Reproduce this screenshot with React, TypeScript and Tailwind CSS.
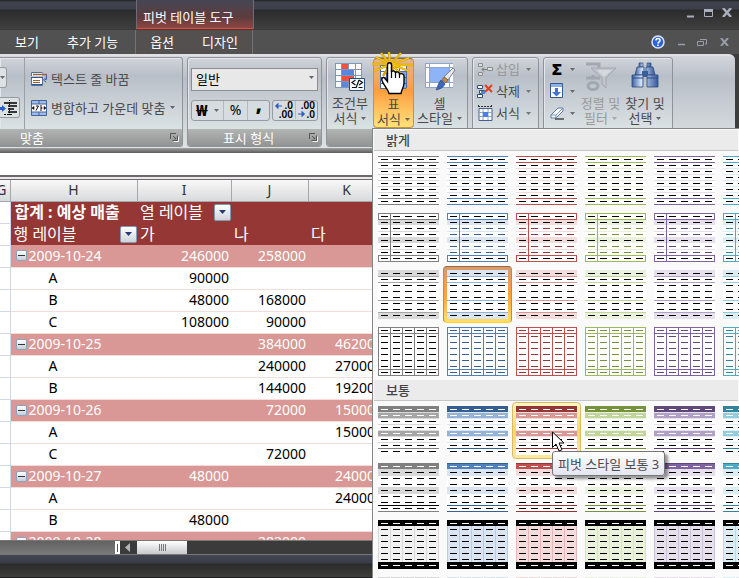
import React from "react";
import type { ReactNode } from "react";
import clsx from "clsx";

// ─── Table style gallery ──────────────────────────────────────────────────────

interface Palette {
  name: string;
  accent: string;
  dark: string;
  mid: string;
  light: string;
  rule: string;
  fill: string;
  ink: string;
}

const PALETTES: Palette[] = [
  { name: "회색", accent: "#808080", dark: "#808080", mid: "#a6a6a6", light: "#d9d9d9", rule: "#d9d9d9", fill: "#f2f2f2", ink: "#000" },
  { name: "파랑", accent: "#4f81bd", dark: "#366092", mid: "#95b3d7", light: "#dbe5f1", rule: "#b8cce4", fill: "#dbe5f1", ink: "#366092" },
  { name: "빨강", accent: "#c0504d", dark: "#953735", mid: "#d99795", light: "#f2dddc", rule: "#e6b9b8", fill: "#f2dddc", ink: "#953735" },
  { name: "녹색", accent: "#9bbb59", dark: "#76923c", mid: "#c2d69b", light: "#eaf1dd", rule: "#d7e4bc", fill: "#eaf1dd", ink: "#76923c" },
  { name: "자주", accent: "#8064a2", dark: "#5f497a", mid: "#b2a1c7", light: "#e5e0ec", rule: "#ccc1da", fill: "#e5e0ec", ink: "#5f497a" },
  { name: "바다색", accent: "#4bacc6", dark: "#31849b", mid: "#93cddd", light: "#daeef3", rule: "#b7dde8", fill: "#daeef3", ink: "#31849b" },
];

type Bar = [y: number, height: number, color: string];

interface Design {
  fill?: string;
  bars: Bar[];
  columns?: number[];
  columnColor?: string;
  boxes?: number[];
  dashes: string[];
}

const K = "#000";
const W = "#fff";

function getDesign(kind: number, p: Palette): Design {
  switch (kind) {
    case 0:
      return {
        bars: [
          [0, 1, p.accent], [6, 1, p.accent], [12, 1, p.light], [18, 1, p.light], [24, 1, p.light],
          [30, 1, p.light], [36, 1, p.light], [42, 1, p.accent], [48, 1, p.accent],
        ],
        dashes: [K, K, K, K, K, K, K, K],
      };
    case 1:
      return {
        bars: [[7, 5, p.light], [18, 1, p.light], [24, 6, p.light], [36, 1, p.light]],
        columns: [12],
        columnColor: p.accent,
        boxes: [0, 42],
        dashes: [K, K, p.ink, p.ink, K, p.ink, p.ink, K],
      };
    case 2:
      return {
        bars: [
          [0, 6, p.light], [6, 1, p.mid], [12, 1, p.mid], [30, 1, p.mid], [42, 1, p.mid], [43, 6, p.light],
        ],
        dashes: [K, K, K, K, K, K, K, K],
      };
    case 3:
      return {
        bars: [],
        columns: [0, 12, 24, 36, 48, 60],
        columnColor: p.accent,
        boxes: [0, 42],
        dashes: Array(8).fill(p.ink),
      };
    case 4:
      return {
        bars: [
          [0, 6, p.dark], [6, 1, p.light], [7, 5, p.mid], [12, 1, p.light], [18, 1, p.light],
          [24, 1, p.light], [25, 5, p.mid], [30, 1, p.light], [36, 1, p.light], [42, 1, p.dark],
        ],
        dashes: [W, W, K, K, W, K, K, K],
      };
    case 5:
      return {
        bars: [
          [0, 6, p.accent], [0, 1, p.dark], [6, 7, p.light], [24, 7, p.light],
          [42, 1, p.name === "회색" ? K : p.dark], [48, 1, p.dark],
        ],
        dashes: [W, K, K, K, K, K, K, K],
      };
    case 6:
      return {
        fill: p.fill,
        bars: [[0, 6, K], [42, 7, K]],
        columns: [0, 12, 24, 36, 48, 60],
        columnColor: p.rule,
        dashes: [W, K, K, K, K, K, K, W],
      };
    default:
      return {
        fill: p.fill,
        bars: [[0, 1, p.light]],
        columns: [12, 24, 36, 48],
        columnColor: W,
        dashes: [K, K, K, K, K, K, K, K],
      };
  }
}

function StyleThumb({ kind, palette }: { kind: number; palette: Palette }) {
  const d = getDesign(kind, palette);
  return (
    <svg width="61" height="49" viewBox="0 0 61 49" className="shrink-0" shapeRendering="crispEdges" aria-hidden="true">
      <rect width="61" height="49" fill={d.fill ?? W} />
      {kind !== 6 &&
        d.bars.map(([y, h, c], i) => <rect key={i} y={y} width="61" height={h} fill={c} />)}
      {d.columns?.map((x) => <rect key={x} x={x} width="1" height="49" fill={d.columnColor} />)}
      {kind === 6 &&
        d.bars.map(([y, h, c], i) => <rect key={i} y={y} width="61" height={h} fill={c} />)}
      {d.boxes?.map((y) => (
        <path key={y} d={`M.5 ${y + 0.5}h60v6H.5z`} fill="none" stroke={palette.accent} />
      ))}
      {d.dashes.map((c, row) =>
        [3, 15, 27, 39, 51].map((x) => (
          <rect key={`${row}-${x}`} x={x} y={row * 6 + 3} width="7" height="1" fill={c} />
        ))
      )}
    </svg>
  );
}

function GallerySection({ title, kinds, children }: { title: string; kinds: number[]; children?: ReactNode }) {
  return (
    <section>
      <h2 className="flex h-[21px] items-center border-b border-[#c5c5c5] bg-[#ebebeb] pl-3 text-[13px] font-medium leading-4 text-[#444]">
        {title}
      </h2>
      <div className="grid grid-cols-[repeat(6,69px)] pt-px">
        {kinds.map((kind) =>
          PALETTES.map((p, col) => {
            const selected = kind === 2 && col === 1;
            const hovered = kind === 4 && col === 2;
            return (
              <div key={`${kind}-${p.name}`} className="relative h-[57px]">
                <button
                  aria-label={`${title} ${kind + 1} ${p.name}`}
                  className={clsx(
                    "flex h-full w-full items-center justify-center",
                    selected &&
                      "rounded-sm border border-[#a8906c] border-t-[#96694a] border-b-[#ffd12e] bg-linear-to-b from-[#d99a68] via-[#ffa03a] to-[#ffe066]",
                    hovered && "rounded-sm border border-[#d9bc62] bg-linear-to-b from-[#fff6c8] via-[#ffd65a] to-[#ffe9a0]"
                  )}
                >
                  <StyleThumb kind={kind} palette={p} />
                </button>
                {hovered && children}
              </div>
            );
          })
        )}
      </div>
    </section>
  );
}

function HoverTip() {
  return (
    <>
      <svg className="absolute left-10 top-[29px] z-20" width="14" height="22" viewBox="0 0 14 22" aria-hidden="true">
        <path d="M.5 1v15.500l3.500-3.500 3 7 3-1.300-3-6.700h5z" fill="#fff" stroke="#000" />
      </svg>
      <div
        role="tooltip"
        className="absolute left-10 top-[49px] z-10 flex h-[25px] items-center whitespace-nowrap rounded-[3px] border border-[#767676] bg-linear-to-b from-white to-[#e4e5f0] px-[5px] text-[13px] leading-4 text-[#4c4c4c] shadow-[3px_3px_3px_rgba(0,0,0,0.4)]"
      >
        피벗 스타일 보통 3
      </div>
    </>
  );
}

// ─── Icons ────────────────────────────────────────────────────────────────────

function Caret({ className = "text-[#6a6a6a]" }: { className?: string }) {
  return (
    <svg width="5" height="3" viewBox="0 0 5 3" className={clsx("shrink-0", className)} aria-hidden="true">
      <path d="M0 0h5L2.500 3z" fill="currentColor" />
    </svg>
  );
}

function WrapIcon() {
  return (
    <svg width="16" height="16" viewBox="0 0 16 16" aria-hidden="true">
      <path d="M1 1h10v4H1zM1 7h10v7H1z" fill="#fff" />
      <path d="M.5 5V1.500h11M.5 7v7.500h11V7" fill="none" stroke="#51709c" />
      <path d="M2 3.500h14" stroke="#a0622d" strokeWidth="1.500" />
      <path d="M0 6.500h12M1 13.500h10" stroke="#37598f" />
      <path d="M2 9.500h7M2 11.500h7" stroke="#a0622d" />
      <path d="M15.500 4v4.500H14M15 6.500L12.500 9l2.500 2" fill="none" stroke="#3b64a8" />
    </svg>
  );
}

function MergeIcon() {
  return (
    <svg width="16" height="16" viewBox="0 0 16 16" aria-hidden="true">
      <path d="M.5.500h15v15H.5z" fill="#9fbbe6" stroke="#40659b" />
      <path d="M1 4h14v8H1z" fill="#fff" />
      <path d="M8 0v4M8 12v4M0 4h16M0 12h16" stroke="#40659b" />
      <path d="M1 8l2-1.500v3zM15 8l-2-1.500v3z" stroke="#111" fill="#111" strokeWidth=".6" />
      <path d="M5 6h2.500L5 10.500M10 5v6M10 8h1.500" fill="none" stroke="#111" />
    </svg>
  );
}

function IndentIcon() {
  return (
    <svg width="17" height="16" viewBox="0 0 17 16" aria-hidden="true">
      <path d="M0 8.500h3" stroke="#2b62c9" strokeWidth="3" />
      <path d="M2 5l4 3.500L2 12z" fill="#2b62c9" />
      <path d="M4 3h13M8 6h9M8 9h6M8 12h9" stroke="#000" strokeWidth="1.500" />
      <path d="M4 14.500h9" stroke="#000" strokeDasharray="2 1" />
      <path d="M9.500 0v16" stroke="#000" strokeDasharray="1 1" />
    </svg>
  );
}

function LauncherIcon() {
  return (
    <svg width="9" height="9" viewBox="0 0 9 9" aria-hidden="true">
      <path d="M.5 6V.5H6" fill="none" stroke="#555" />
      <path d="M3.500 8.500h5v-5M3 3l3 3M6 3.500V6H3.500" fill="none" stroke="#f4f4f4" />
      <path d="M2.500 7.500h5v-5M3 3l3 3M6 3.500V6H3.500" fill="none" stroke="#555" />
    </svg>
  );
}

function ConditionalIcon() {
  return (
    <svg width="32" height="30" viewBox="0 0 32 30" aria-hidden="true">
      <path d="M1 1h27v24H1z" fill="#fff" />
      <path d="M8 1h6v6H8zM8 13h12v6H8z" fill="#f0513c" />
      <path d="M8 7h12v6H8zM8 19h6v6H8z" fill="#5b86dd" />
      <path d="M1.500 1v24M7.500 1v24M14.500 1v6M14.500 19v6M21.500 1v24M27.500 1v24M1 1.500h27M1 7.500h27M1 13.500h27M1 19.500h27M1 25.500h27" stroke="#7d96bd" />
      <path d="M15.500 16.500h15v12h-15z" fill="#f5f8fc" stroke="#2f4c78" />
      <path d="M21.500 18L18 20.500l3.500 2.500M18 25.500h4M25 18l3.500 2.500L25 23M24.500 25.500h4M22 26l3-8" fill="none" stroke="#111" strokeWidth="1.200" />
    </svg>
  );
}

function TableIcon() {
  return (
    <svg width="32" height="30" viewBox="0 0 32 30" aria-hidden="true">
      <path d="M2 2h26v23H2z" fill="#fff" />
      <path d="M8 8h20v17H8z" fill="#7fa7e8" />
      <path d="M2.500 2v23M8.500 2v23M14.500 2v23M21.500 2v23M28.500 2v23M2 2.500h26M2 8.500h26M2 14.500h26M2 20.500h26M2 25.500h26" stroke="#4a6da8" />
    </svg>
  );
}

function CellStyleIcon() {
  return (
    <svg width="32" height="30" viewBox="0 0 32 30" aria-hidden="true">
      <path d="M1 1h28v24H1z" fill="#fff" />
      <path d="M6 6h19v14H6z" fill="#8fb3f7" />
      <path d="M1.500 1v24M5.500 1v24M25.500 1v24M1 1.500h28M1 5.500h28M1 20.500h28M1 25.500h28" stroke="#8ba5d0" />
      <path d="M29 6l2 2-7 10-4-3z" fill="#e8eaee" stroke="#7a7f8a" />
      <path d="M20 15l4 3-2 3-4-3z" fill="#c48b4a" stroke="#7b5323" strokeWidth=".7" />
      <path d="M17 18l4 4c-2 4-5 5-9 6 2-3 2-7 5-10z" fill="#3b68bb" stroke="#27498a" strokeWidth=".7" />
    </svg>
  );
}

function InsertIcon() {
  return (
    <svg width="16" height="15" viewBox="0 0 16 15" aria-hidden="true">
      <path d="M1.500 1.500h4v3h-4zM1.500 10.500h4v3h-4zM10.500 5.500h5v3h-5z" fill="#dcdcdc" stroke="#8d8d8d" />
      <path d="M5 7.500h5M7 5.500l-2 2 2 2" fill="none" stroke="#777" />
    </svg>
  );
}

function DeleteIcon() {
  return (
    <svg width="16" height="15" viewBox="0 0 16 15" aria-hidden="true">
      <path d="M.5 1.500h5v3h-5zM.5 10.500h5v3h-5zM2.500 6.500h5v3h-5z" fill="#fff" stroke="#2f4d7c" />
      <path d="M4 7h4v3H4z" fill="#4c86e4" />
      <path d="M8 1l7 7M15 1L8 8" stroke="#e2401c" strokeWidth="2" />
    </svg>
  );
}

function FormatIcon() {
  return (
    <svg width="16" height="16" viewBox="0 0 16 16" aria-hidden="true">
      <path d="M2 3.500h13v12H2z" fill="#fff" stroke="#44618f" />
      <path d="M6 4v11M11 4v11M2 7.500h13M2 11.500h13" stroke="#8aa3c9" />
      <path d="M6 7h5v5H6z" fill="#4c7fe0" />
      <path d="M1 1.500h14M1.500 0v3M14.500 0v3" stroke="#333" strokeDasharray="2 1" />
    </svg>
  );
}

function FillIcon() {
  return (
    <svg width="14" height="16" viewBox="0 0 14 16" aria-hidden="true">
      <path d="M.5.500h12v14H.5z" fill="#fff" stroke="#34578f" />
      <path d="M1 1h11v3H1z" fill="#8fb0e6" />
      <path d="M5 5h3v4h3l-4.500 4.500L2 9h3z" fill="#3f73d8" />
    </svg>
  );
}

function EraserIcon() {
  return (
    <svg width="15" height="13" viewBox="0 0 15 13" aria-hidden="true">
      <path d="M1 8l7-7h5v3l-7 7H1z" fill="#f7f9fc" stroke="#5f7ba8" />
      <path d="M1 8h5l7-7M6 8v3" fill="none" stroke="#7f98c0" />
      <path d="M5 12h9" stroke="#000" />
    </svg>
  );
}

function SortFilterIcon() {
  return (
    <svg width="32" height="30" viewBox="0 0 32 30" aria-hidden="true">
      <path d="M1 2h13v9M1 16h14M8 13v3" fill="none" stroke="#a3a7ae" strokeWidth="3" />
      <ellipse cx="8" cy="24" rx="5" ry="3.500" fill="none" stroke="#a3a7ae" strokeWidth="3" />
      <path d="M6 6h25L21 16v10l-4-4v-6z" fill="#c0c3c9" stroke="#a3a7ae" />
      <path d="M12 8h15l-8 7z" fill="#d5d8dc" />
    </svg>
  );
}

function BinocularsIcon() {
  return (
    <svg width="28" height="26" viewBox="0 0 28 26" aria-hidden="true">
      <defs>
        <linearGradient id="barrel">
          <stop offset="0" stopColor="#3a5f9e" />
          <stop offset=".35" stopColor="#d3e2fa" />
          <stop offset="1" stopColor="#35599a" />
        </linearGradient>
      </defs>
      <path d="M8 1h4v4H8zM16 1h4v4h-4z" fill="url(#barrel)" stroke="#2d4a7c" strokeWidth=".7" />
      <path d="M6 5h7v8H4zM15 5h7l2 8h-9z" fill="url(#barrel)" stroke="#2d4a7c" strokeWidth=".8" />
      <path d="M11 9h6v6h-6z" fill="#3a5f9e" />
      <path d="M1 13h11v12H1zM16 13h11v12H16z" fill="url(#barrel)" stroke="#2d4a7c" strokeWidth=".8" />
      <path d="M1 16h11M16 16h11" stroke="#2d4f8a" />
    </svg>
  );
}

function HandPointer() {
  return (
    <svg className="h-[50px] w-12" viewBox="0 0 48 50" aria-hidden="true">
      <path
        d="M12 4l8 10M20 3l1 11M32 4l-9 10M40 9l-16 6M44 16H24M40 22l-16-6M34 27l-10-10M27 30l-5-14M14 27l7-11M5 22l15-6M3 15h16M7 8l13 7"
        fill="none"
        stroke="#d9a200"
        strokeWidth="2.400"
      />
      <path
        d="M12 4l8 10M20 3l1 11M32 4l-9 10M40 9l-16 6M44 16H24M40 22l-16-6M34 27l-10-10M5 22l15-6M3 15h16M7 8l13 7"
        fill="none"
        stroke="#fbcf1c"
        strokeWidth="1"
      />
      <path
        d="M18.500 16c0-3 4-3 4 0v7c1-2 4-1 4 1 1-2 4-1 4 1 2-1 4.500 0 4.500 2v7c0 4-2 5-3 10.500h-12c0-3-6-9-7-13-1-3 2-4 3-2l2.500 3z"
        fill="#fff"
        stroke="#000"
        strokeWidth="1.400"
      />
      <path d="M22.500 21v8M26.500 23v6M30.500 24v5" stroke="#000" strokeWidth="1.200" />
    </svg>
  );
}

// ─── Ribbon ───────────────────────────────────────────────────────────────────

interface RibbonGroupProps {
  label?: string;
  labelClass?: string;
  className?: string;
  children: ReactNode;
}

function RibbonGroup({ label, labelClass = "text-center", className, children }: RibbonGroupProps) {
  return (
    <section
      className={clsx(
        "flex h-[90px] shrink-0 flex-col overflow-hidden rounded-[3px] border border-[#8f9399] bg-linear-to-b from-[#d0d4da] via-[#b9bfc8] via-20% to-[#e6eded] shadow-[inset_1px_1px_0_#e3e6ea]",
        className
      )}
    >
      <div className="flex min-h-0 flex-1">{children}</div>
      <div className="flex h-[17px] items-center bg-linear-to-b from-[#b3b5b5] to-[#929393] text-[13px] leading-4 text-white">
        <span className={clsx("flex-1", labelClass)}>{label}</span>
        {label && (
          <button aria-label={`${label} 옵션`} className="pr-[3px]">
            <LauncherIcon />
          </button>
        )}
      </div>
    </section>
  );
}

interface BigButtonProps {
  icon: ReactNode;
  top: string;
  bottom: string;
  active?: boolean;
  disabled?: boolean;
  className?: string;
}

function BigButton({ icon, top, bottom, active, disabled, className }: BigButtonProps) {
  return (
    <button
      disabled={disabled}
      className={clsx(
        "flex h-[70px] shrink-0 flex-col items-center whitespace-nowrap pt-1 text-[13px] leading-[15px]",
        disabled ? "text-[#999]" : "text-[#4a4a4a]",
        active &&
          "rounded-sm border border-[#c9953a] border-t-[#8d6a48] bg-linear-to-b from-[#e3b68a] via-[#fb9c3c] via-45% to-[#ffe27a]",
        className
      )}
    >
      <span className="flex h-[34px] items-start justify-center">{icon}</span>
      <span>{top}</span>
      <span className="flex items-center gap-1">
        {bottom}
        <Caret className={disabled ? "text-[#aaa]" : "text-[#666]"} />
      </span>
    </button>
  );
}

function SmallButton({ icon, label, disabled }: { icon: ReactNode; label: string; disabled?: boolean }) {
  return (
    <button
      disabled={disabled}
      className={clsx(
        "flex h-[22px] items-center gap-[3px] text-[13px] leading-4",
        disabled ? "text-[#999]" : "text-[#4a4a4a]"
      )}
    >
      <span className="flex w-4 justify-center">{icon}</span>
      <span>{label}</span>
      <Caret className="ml-[3px] text-[#777]" />
    </button>
  );
}

function Ribbon() {
  return (
    <div className="mr-1 flex h-[94px] shrink-0 gap-1 overflow-hidden rounded-tr-md border-t-2 border-[#dfe1e5] bg-linear-to-b from-[#d3d6db] via-[#b9bfc8] via-25% to-[#dde3e3] pt-px">
      <RibbonGroup label="맞춤" labelClass="pl-5" className="w-[183px] rounded-l-none border-l-0">
        <div className="flex w-[25px] shrink-0 flex-col gap-[9px] border-r border-[#9ba0a7] py-[9px] pr-1">
          <button aria-label="방향" className="flex h-[21px] w-[7px] items-center rounded-r-[3px] border border-l-0 border-[#969ba1] bg-[#dde3e5]">
            <Caret />
          </button>
          <button aria-label="들여쓰기" className="flex h-[21px] w-5 items-center rounded-r-[3px] border border-l-0 border-[#969ba1] bg-[#dde3e5]">
            <IndentIcon />
          </button>
        </div>
        <div className="flex flex-col gap-1.5 pl-1.5 pt-[9px] text-[13px] leading-4 text-[#4a4a4a]">
          <button className="flex h-[23px] items-center gap-1">
            <WrapIcon />
            텍스트 줄 바꿈
          </button>
          <button className="flex h-[23px] items-center gap-1 whitespace-nowrap">
            <MergeIcon />
            병합하고 가운데 맞춤
            <Caret className="ml-px text-[#666]" />
          </button>
        </div>
      </RibbonGroup>

      <RibbonGroup label="표시 형식" className="w-[135px]">
        <div className="flex w-full flex-col gap-[9px] px-[3px] pt-2">
          <div className="relative">
            <select
              aria-label="표시 형식"
              className="h-[23px] w-full appearance-none border border-[#8d8d8d] bg-[#e8e8e8] px-1 text-[13px] leading-4 text-black"
            >
              <option>일반</option>
            </select>
            <Caret className="pointer-events-none absolute right-1 top-2.5 text-[#666]" />
          </div>
          <div className="flex justify-between">
            <div className="flex h-[21px] items-center rounded-[3px] border border-[#969ba1] bg-[#d6dcdf] text-black">
              <button className="flex h-full items-center gap-1.5 px-1 text-[15px] font-black">
                ₩
                <Caret />
              </button>
              <button className="h-full border-x border-[#b4b9be] px-1.5 text-sm leading-4">%</button>
              <button className="flex h-full w-[21px] items-center justify-center pb-3 text-xl font-black leading-3">,</button>
            </div>
            <div className="flex h-[21px] items-center rounded-[3px] border border-[#969ba1] bg-[#d6dcdf] text-[10px] font-semibold leading-[9px] text-black">
              <button aria-label="자릿수 늘림" className="relative w-[22px] pr-0.5 text-right">
                <svg className="absolute left-0.5 top-0.5" width="7" height="6" viewBox="0 0 7 6" aria-hidden="true">
                  <path d="M7 3H2M3 .500L.500 3 3 5.500z" fill="#2a5cc0" stroke="#2a5cc0" />
                </svg>
                .0
                <br />
                .00
              </button>
              <button aria-label="자릿수 줄임" className="relative w-[22px] border-l border-[#b4b9be] pr-0.5 text-right">
                .00
                <br />
                .0
                <svg className="absolute bottom-0.5 left-0.5" width="7" height="6" viewBox="0 0 7 6" aria-hidden="true">
                  <path d="M0 3h5M4 .500L6.500 3 4 5.500z" fill="#2a5cc0" stroke="#2a5cc0" />
                </svg>
              </button>
            </div>
          </div>
        </div>
      </RibbonGroup>

      <RibbonGroup className="w-[142px]">
        <BigButton className="w-[46px]" icon={<ConditionalIcon />} top="조건부" bottom="서식" />
        <BigButton className="w-[41px]" icon={<TableIcon />} top="표" bottom="서식" active />
        <BigButton className="w-[51px]" icon={<CellStyleIcon />} top="셀" bottom="스타일" />
      </RibbonGroup>

      <RibbonGroup className="w-[67px]">
        <div className="flex flex-col pl-1">
          <SmallButton icon={<InsertIcon />} label="삽입" disabled />
          <SmallButton icon={<DeleteIcon />} label="삭제" />
          <SmallButton icon={<FormatIcon />} label="서식" />
        </div>
      </RibbonGroup>

      <RibbonGroup className="w-[130px]">
        <div className="flex w-[31px] shrink-0 flex-col pl-1.5">
          <button aria-label="합계" className="flex h-[22px] items-center justify-between pl-0.5 text-base font-black leading-4 text-black">
            Σ
            <Caret />
          </button>
          <button aria-label="채우기" className="flex h-[22px] items-center justify-between">
            <FillIcon />
            <Caret />
          </button>
          <button aria-label="지우기" className="flex h-[22px] items-center justify-between">
            <EraserIcon />
            <Caret />
          </button>
        </div>
        <BigButton className="ml-[3px] w-[45px]" icon={<SortFilterIcon />} top="정렬 및" bottom="필터" disabled />
        <BigButton className="w-11" icon={<BinocularsIcon />} top="찾기 및" bottom="선택" />
      </RibbonGroup>
    </div>
  );
}

// ─── Title bar and tabs ───────────────────────────────────────────────────────

function TitleBar() {
  return (
    <header className="flex h-[30px] shrink-0 items-stretch border-b border-[#3a3a3a] bg-[linear-gradient(#202020_0,#3f424d_2px,#3d404b_9px,#2b2b2b_10px,#3f3f3f_100%)]">
      <div className="w-[136px] shrink-0" />
      <h1 className="flex w-[118px] shrink-0 items-center border-x border-b border-[#6c6d78] border-b-[#ef4b3c] bg-linear-to-b from-[#444653] via-[#5c3c3e] via-60% to-[#8f4440] pl-1.5 pt-1.5 text-[13px] leading-4 text-white">
        피벗 테이블 도구
      </h1>
      <div className="flex flex-1 items-center justify-end gap-[9px] pb-1 pr-[7px] text-[#a9aebd]">
        <button aria-label="최소화">
          <svg width="9" height="10" viewBox="0 0 9 10"><path d="M1 8.500h7" stroke="currentColor" strokeWidth="2" /></svg>
        </button>
        <button aria-label="최대화">
          <svg width="9" height="8" viewBox="0 0 9 8"><path d="M.5 1v6.500h8V1" fill="none" stroke="currentColor" /><path d="M0 1.500h9" stroke="currentColor" strokeWidth="3" /></svg>
        </button>
        <button aria-label="닫기">
          <svg width="10" height="9" viewBox="0 0 10 9"><path d="M1 0l8 9M9 0L1 9" stroke="currentColor" strokeWidth="2.500" /></svg>
        </button>
      </div>
    </header>
  );
}

function TabRow() {
  return (
    <nav className="flex h-6 shrink-0 items-stretch bg-[#515151] pl-px text-[13px] leading-4 text-white">
      <button className="px-3.5">보기</button>
      <button className="px-3.5">추가 기능</button>
      <div className="ml-[3px] flex border-x border-[#73747a] bg-[#545050]">
        <button className="px-3.5">옵션</button>
        <button className="px-3.5">디자인</button>
      </div>
      <div className="flex flex-1 items-center justify-end gap-3 pr-2.5 text-[#989cab]">
        <button aria-label="도움말">
          <svg width="14" height="14" viewBox="0 0 14 14">
            <circle cx="7" cy="7" r="6" fill="#2c63d6" stroke="#dbe6ff" strokeWidth="1.500" />
            <path d="M5 5.500c0-2.700 4-2.700 4 0 0 1.500-2 1.500-2 3M7 9.500v1.500" fill="none" stroke="#fff" strokeWidth="1.600" />
          </svg>
        </button>
        <button aria-label="창 최소화">
          <svg width="8" height="8" viewBox="0 0 8 8"><path d="M1 6.500h7" stroke="currentColor" strokeWidth="1.500" /></svg>
        </button>
        <button aria-label="창 복원">
          <svg width="10" height="7" viewBox="0 0 10 7"><path d="M.5 2.500h6v4h-6zM3 .500h6.500v4.500H8" fill="none" stroke="currentColor" /></svg>
        </button>
        <button aria-label="창 닫기" className="ml-px">
          <svg width="9" height="8" viewBox="0 0 9 8"><path d="M1 0l7 8M8 0L1 8" stroke="currentColor" strokeWidth="2" /></svg>
        </button>
      </div>
    </nav>
  );
}

// ─── Sheet ────────────────────────────────────────────────────────────────────

interface PivotRow {
  label: string;
  group?: boolean;
  values: [string, string, string];
}

const ROWS: PivotRow[] = [
  { label: "2009-10-24", group: true, values: ["246000", "258000", ""] },
  { label: "A", values: ["90000", "", ""] },
  { label: "B", values: ["48000", "168000", ""] },
  { label: "C", values: ["108000", "90000", ""] },
  { label: "2009-10-25", group: true, values: ["", "384000", "462000"] },
  { label: "A", values: ["", "240000", "270000"] },
  { label: "B", values: ["", "144000", "192000"] },
  { label: "2009-10-26", group: true, values: ["", "72000", "150000"] },
  { label: "A", values: ["", "", "150000"] },
  { label: "C", values: ["", "72000", ""] },
  { label: "2009-10-27", group: true, values: ["48000", "", "240000"] },
  { label: "A", values: ["", "", "240000"] },
  { label: "B", values: ["48000", "", ""] },
  { label: "2009-10-28", group: true, values: ["", "282000", ""] },
];

function FilterButton({ label }: { label: string }) {
  return (
    <button
      aria-label={label}
      className="flex h-[17px] w-[17px] shrink-0 items-center justify-center rounded-[2px] border border-[#7f9db9] bg-linear-to-b from-white to-[#cfd4da]"
    >
      <svg width="7" height="4" viewBox="0 0 7 4"><path d="M0 0h7L3.500 4z" fill="#253a78" /></svg>
    </button>
  );
}

function Sheet() {
  return (
    <main className="min-h-0 flex-1 overflow-hidden bg-white">
      <table className="w-full table-fixed border-collapse text-sm leading-4 text-black">
        <colgroup>
          <col className="w-2.5" />
          <col className="w-[127px]" />
          <col className="w-[94px]" />
          <col className="w-[77px]" />
          <col className="w-[77px]" />
          <col />
        </colgroup>
        <thead>
          <tr className="h-[21px] bg-linear-to-b from-[#f8f8f8] to-[#d9dadc] text-[#333]">
            {["G", "H", "I", "J", "K", "L"].map((c) => (
              <th key={c} className="overflow-hidden border-b border-r border-[#a5a7aa] p-0 font-normal">
                <span className={clsx("flex", c === "G" ? "justify-end pr-[3px]" : "justify-center")}>{c}</span>
              </th>
            ))}
          </tr>
        </thead>
        <tbody>
          <tr className="h-[22px] bg-[#953735] text-base leading-4 text-white">
            <td className="border-b border-r border-[#d0d7e5] bg-white" />
            <th className="whitespace-nowrap p-0 pl-1 text-left font-bold">합계 : 예상 매출</th>
            <td className="p-0 pl-[3px]">
              <div className="flex items-center justify-between whitespace-nowrap">
                열 레이블
                <FilterButton label="열 레이블 필터" />
              </div>
            </td>
            <td colSpan={3} />
          </tr>
          <tr className="h-[22px] bg-[#953735] text-base leading-4 text-white">
            <td className="border-b border-r border-[#d0d7e5] bg-white" />
            <td className="p-0 pl-[3px]">
              <div className="flex items-center justify-between">
                행 레이블
                <FilterButton label="행 레이블 필터" />
              </div>
            </td>
            <td className="p-0 pl-[3px]">가</td>
            <td className="p-0 pl-[3px]">나</td>
            <td className="p-0 pl-[3px]">다</td>
            <td />
          </tr>
          {ROWS.map((row, i) => (
            <tr
              key={i}
              className={clsx("h-[22px] border-b border-[#f2dddc]", row.group ? "bg-[#d99795] text-white" : "bg-white")}
            >
              <td className="border-b border-r border-[#d0d7e5] bg-white p-0" />
              <td className="whitespace-nowrap p-0">
                {row.group ? (
                  <div className="flex items-center gap-0.5 pl-[5px]">
                    <button
                      aria-label={`${row.label} 축소`}
                      className="flex h-[11px] w-[11px] items-center justify-center rounded-[2px] border border-[#8ba3bd] bg-linear-to-b from-white to-[#c5cdd6]"
                    >
                      <span className="h-px w-[7px] bg-[#333]" />
                    </button>
                    {row.label}
                  </div>
                ) : (
                  <div className="pl-[38px]">{row.label}</div>
                )}
              </td>
              {row.values.map((v, j) => (
                <td key={j} className="p-0 pr-0.5 text-right">{v}</td>
              ))}
              <td />
            </tr>
          ))}
        </tbody>
      </table>
    </main>
  );
}

function SheetFooter() {
  return (
    <footer className="shrink-0">
      <div className="flex h-[15px] items-stretch border-y border-[#777] bg-[#3b3b3b]">
        <div className="w-[115px] bg-linear-to-b from-[#626262] to-[#7a7a7a]" />
        <div className="flex w-[5px] items-center justify-center bg-white">
          <span className="h-2 w-px bg-[#555]" />
        </div>
        <button aria-label="왼쪽으로" className="flex w-[17px] items-center pl-[5px]">
          <svg width="5" height="9" viewBox="0 0 5 9"><path d="M5 0v9L0 4.500z" fill="#b5b5b5" /></svg>
        </button>
        <div className="flex w-[50px] items-center justify-center gap-px bg-linear-to-b from-white to-[#c9cacc]">
          {[0, 1, 2, 3].map((n) => (
            <span key={n} className="h-[7px] w-px bg-[#777]" />
          ))}
        </div>
      </div>
      <div className="h-[23px] border-b border-[#1f1f1f] bg-[linear-gradient(#434652_0,#3a3d48_8px,#2b2b2b_9px,#3e3e3c_100%)]" />
    </footer>
  );
}

export default function App() {
  return (
    <div className="relative flex h-screen flex-col overflow-hidden bg-[#3d3d3d] font-['Noto_Sans','Noto_Sans_CJK_KR',sans-serif]">
      <TitleBar />
      <TabRow />
      <Ribbon />
      <div className="h-[5px] shrink-0 bg-linear-to-b from-[#a0a0a0] to-[#5c5c5c]" />
      <div className="h-[22px] shrink-0 bg-white" />
      <div className="h-[5px] shrink-0 border-b border-t-2 border-[#6c686c] bg-[#e9e9ea]" />
      <Sheet />
      <SheetFooter />

      <div className="absolute bottom-0 left-[372px] right-0 top-32 overflow-hidden border-l border-t border-[#868686] bg-[#fafafa] p-px">
        <GallerySection title="밝게" kinds={[0, 1, 2, 3]} />
        <GallerySection title="보통" kinds={[4, 5, 6, 7]}>
          <HoverTip />
        </GallerySection>
      </div>
      <div className="pointer-events-none absolute left-[369px] top-[49px]">
        <HandPointer />
      </div>
    </div>
  );
}
